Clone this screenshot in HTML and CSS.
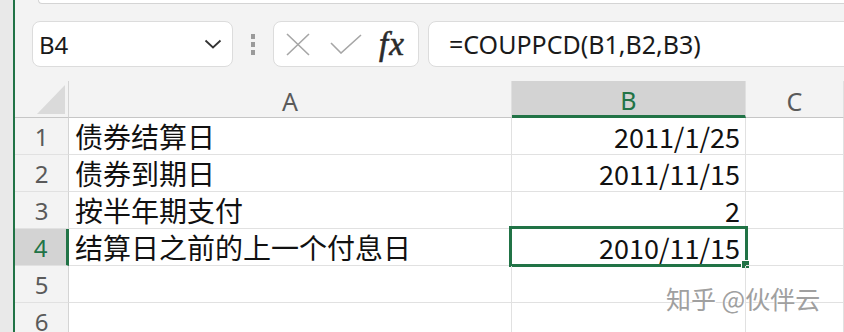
FILE: index.html
```html
<!DOCTYPE html>
<html>
<head>
    <title>COUPPCD</title>
    <link rel="stylesheet" href="styles.css">
</head>
<body>
    <div class="window">
        <div class="rail"></div>
        <div class="main">
            <div class="ribbon-edge"></div>
            <div class="formula-bar">
                <div class="name-box">
                    <span>B4</span>
                    <svg class="chevron" width="18" height="10" viewBox="0 0 18 10"><path d="M1.5 1.5 L9 8.5 L16.5 1.5" fill="none" stroke="#333" stroke-width="1.8"/></svg>
                </div>
                <div class="grip"><i></i><i></i><i></i></div>
                <div class="fx-box">
                    <svg class="cancel" width="24" height="23" viewBox="0 0 24 23"><path d="M1 1 L23 22 M23 1 L1 22" stroke="#a6a6a6" stroke-width="1.6"/></svg>
                    <svg class="enter" width="32" height="20" viewBox="0 0 32 20"><path d="M1 9 L11 19 L31 1" fill="none" stroke="#a6a6a6" stroke-width="1.6"/></svg>
                    <span class="fx">fx</span>
                </div>
                <div class="formula-input">=COUPPCD(B1,B2,B3)</div>
            </div>

            <div class="sheet">
                <div class="corner"><div class="corner-tri"></div></div>
                <div class="col-head">A</div>
                <div class="col-head active">B</div>
                <div class="col-head">C</div>

                <div class="row-head">1</div>
                <div class="cell">债券结算日</div>
                <div class="cell num">2011/1/25</div>
                <div class="cell"></div>

                <div class="row-head">2</div>
                <div class="cell">债券到期日</div>
                <div class="cell num">2011/11/15</div>
                <div class="cell"></div>

                <div class="row-head">3</div>
                <div class="cell">按半年期支付</div>
                <div class="cell num">2</div>
                <div class="cell"></div>

                <div class="row-head active">4</div>
                <div class="cell">结算日之前的上一个付息日</div>
                <div class="cell num selected">2010/11/15<span class="sel-box"></span><span class="fill-handle"></span></div>
                <div class="cell"></div>

                <div class="row-head">5</div>
                <div class="cell"></div>
                <div class="cell"></div>
                <div class="cell"></div>

                <div class="row-head">6</div>
                <div class="cell"></div>
                <div class="cell"></div>
                <div class="cell"></div>
            </div>
        </div>
        <div class="watermark">知乎 @伙伴云</div>
    </div>
</body>
</html>
```

FILE: styles.css
```css
body {
    margin: 0;
    padding: 0;
    width: 844px;
    height: 332px;
    overflow: hidden;
    background: #ffffff;
    font-family: "Noto Sans", "Liberation Sans", sans-serif;
}

.window {
    position: relative;
    display: flex;
    width: 844px;
    height: 332px;
    overflow: hidden;
}

.rail {
    width: 13px;
    flex: none;
    background-color: #e9e9e9;
    border-right: 2px solid #217346;
}

.main {
    flex: 1;
    min-width: 0;
    background-color: #f3f3f3;
}

/* bottom of the ribbon panel above */
.ribbon-edge {
    height: 3px;
    margin-left: 23px;
    background-color: #ffffff;
    border-bottom: 1px solid #d4d4d4;
    border-left: 1px solid #d4d4d4;
    border-bottom-left-radius: 8px;
}

.formula-bar {
    display: flex;
    align-items: center;
    padding: 17px 0 14px 17px;
    height: 46px;
}

.name-box,
.fx-box,
.formula-input {
    box-sizing: border-box;
    height: 46px;
    background-color: #ffffff;
    border: 1px solid #dcdcdc;
    border-radius: 8px;
    display: flex;
    align-items: center;
}

.name-box {
    width: 201px;
    padding: 0 10px 0 6px;
    justify-content: space-between;
    font-size: 24px;
    color: #1a1a1a;
}

.grip {
    display: flex;
    flex-direction: column;
    gap: 3px;
    margin: 0 18px;
}

.grip i {
    display: block;
    width: 4px;
    height: 5px;
    background-color: #9a9a9a;
}

.fx-box {
    width: 146px;
    padding-left: 12px;
}

.cancel {
    margin-right: 20px;
}

.enter {
    margin-right: 17px;
}

.fx {
    font-family: "Liberation Serif", serif;
    font-style: italic;
    font-size: 33px;
    color: #2b2b2b;
    letter-spacing: 1px;
    -webkit-text-stroke: 0.6px #2b2b2b;
}

.formula-input {
    flex: 1;
    margin-left: 9px;
    margin-right: -20px;
    padding-left: 20px;
    font-size: 25px;
    color: #1a1a1a;
}

.sheet {
    display: grid;
    grid-template-columns: 54px 443px 234px 1fr;
    grid-template-rows: 37px repeat(6, 37px);
    background-color: #ffffff;
}

.corner,
.col-head,
.row-head {
    box-sizing: border-box;
    background-color: #f3f3f3;
    color: #5a5a5a;
    display: flex;
    align-items: center;
    justify-content: center;
}

.corner {
    border-right: 1px solid #d4d4d4;
    border-bottom: 1px solid #c6c6c6;
    align-items: flex-end;
    justify-content: flex-end;
    padding: 0 3px 3px 0;
}

.corner-tri {
    width: 28px;
    height: 29px;
    background-color: #dadada;
    clip-path: polygon(100% 0, 100% 100%, 0 100%);
}

.col-head {
    font-size: 25px;
    border-right: 1px solid #e0e0e0;
    border-bottom: 1px solid #c6c6c6;
    padding-top: 4px;
}

.col-head.active {
    background-color: #d3d3d3;
    color: #217346;
    border-bottom: 3px solid #217346;
}

.row-head {
    font-size: 24px;
    border-right: 1px solid #d4d4d4;
    border-bottom: 1px solid #e1e1e1;
}

.row-head.active {
    background-color: #d3d3d3;
    color: #217346;
    border-right: 3px solid #217346;
}

.cell {
    box-sizing: border-box;
    position: relative;
    border-right: 1px solid #e1e1e1;
    border-bottom: 1px solid #e1e1e1;
    padding: 0 6px;
    font-family: "Noto Sans CJK SC", sans-serif;
    font-size: 28px;
    color: #111111;
    display: flex;
    align-items: center;
    white-space: nowrap;
}

.cell.num {
    justify-content: flex-end;
    padding-right: 5px;
    font-size: 27px;
}

.sel-box {
    position: absolute;
    top: -3px;
    left: -3px;
    right: -3px;
    bottom: -2px;
    border: 3px solid #217346;
}

.fill-handle {
    position: absolute;
    right: -5px;
    bottom: -4px;
    width: 7px;
    height: 7px;
    background-color: #217346;
    border: 1px solid #ffffff;
}

.watermark {
    position: absolute;
    left: 666px;
    top: 280px;
    font-family: "Noto Sans CJK SC", sans-serif;
    font-size: 25px;
    color: #a0a0a0;
    text-shadow: 0 0 2px #ffffff, 1px 1px 0 #ffffff;
    white-space: nowrap;
}
```
